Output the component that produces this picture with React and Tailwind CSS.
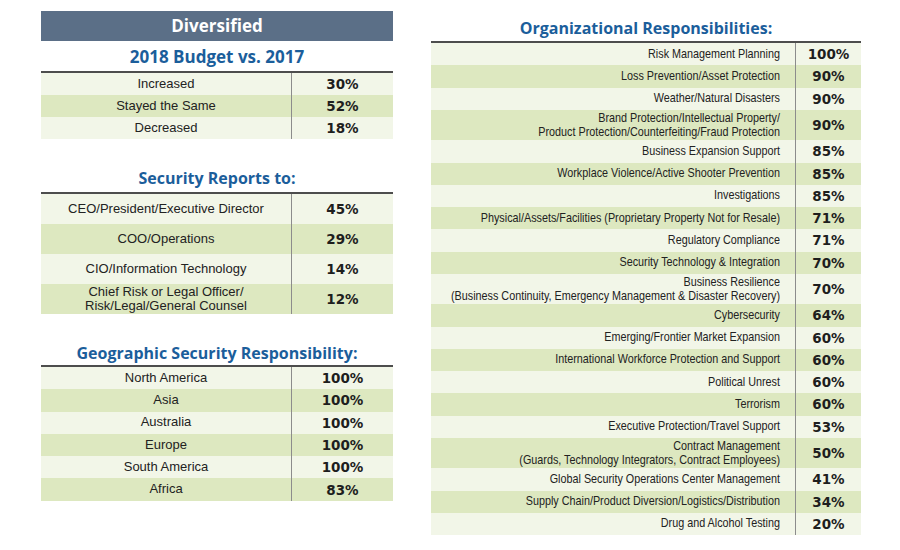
import React from 'react';

const budget = [
  ['Increased', '30%'],
  ['Stayed the Same', '52%'],
  ['Decreased', '18%'],
];

const reports = [
  ['CEO/President/Executive Director', '45%'],
  ['COO/Operations', '29%'],
  ['CIO/Information Technology', '14%'],
  [['Chief Risk or Legal Officer/', 'Risk/Legal/General Counsel'], '12%'],
];

const geo = [
  ['North America', '100%'],
  ['Asia', '100%'],
  ['Australia', '100%'],
  ['Europe', '100%'],
  ['South America', '100%'],
  ['Africa', '83%'],
];

const org = [
  ['Risk Management Planning', '100%'],
  ['Loss Prevention/Asset Protection', '90%'],
  ['Weather/Natural Disasters', '90%'],
  [['Brand Protection/Intellectual Property/', 'Product Protection/Counterfeiting/Fraud Protection'], '90%'],
  ['Business Expansion Support', '85%'],
  ['Workplace Violence/Active Shooter Prevention', '85%'],
  ['Investigations', '85%'],
  ['Physical/Assets/Facilities (Proprietary Property Not for Resale)', '71%'],
  ['Regulatory Compliance', '71%'],
  ['Security Technology & Integration', '70%'],
  [['Business Resilience', '(Business Continuity, Emergency Management & Disaster Recovery)'], '70%'],
  ['Cybersecurity', '64%'],
  ['Emerging/Frontier Market Expansion', '60%'],
  ['International Workforce Protection and Support', '60%'],
  ['Political Unrest', '60%'],
  ['Terrorism', '60%'],
  ['Executive Protection/Travel Support', '53%'],
  [['Contract Management', '(Guards, Technology Integrators, Contract Employees)'], '50%'],
  ['Global Security Operations Center Management', '41%'],
  ['Supply Chain/Product Diversion/Logistics/Distribution', '34%'],
  ['Drug and Alcohol Testing', '20%'],
];

const Title = ({ children, className }) => (
  <div className={`flex items-end justify-center leading-[20px] font-bold text-[#1b5e9b] font-['Open_Sans',sans-serif] ${className}`}>
    {children}
  </div>
);

const Label = ({ text }) =>
  Array.isArray(text) ? (
    <>
      {text.map((t) => (
        <div key={t}>{t}</div>
      ))}
    </>
  ) : (
    <div>{text}</div>
  );

const LeftTable = ({ rows, rowH }) => (
  <div className="border-t-2 border-[#4d4d4d]">
    {rows.map(([label, value], i) => (
      <div
        key={value + i}
        className={`flex ${rowH} ${i % 2 ? 'bg-[#dde8c0]' : 'bg-[#f2f6e8]'}`}
      >
        <div className="w-[250px] pb-[1px] flex flex-col items-center justify-center text-center text-[13px] leading-[14px] text-[#222] font-['Liberation_Sans',sans-serif]">
          <Label text={label} />
        </div>
        <div className="flex-1 flex items-center justify-center border-l border-[#8c8c8c] text-[13.5px] font-bold text-[#1e1e1e] font-['DejaVu_Sans',sans-serif]">
          {value}
        </div>
      </div>
    ))}
  </div>
);

export default function App() {
  return (
    <div className="w-[900px] h-[550px] bg-white flex">
      <div className="ml-[41px] mt-[11px] w-[352px] flex flex-col">
        <div className="h-[30px] bg-[#5b6f87] flex items-center justify-center text-white text-[17px] font-bold font-['Open_Sans',sans-serif]">
          Diversified
        </div>
        <Title className="h-[30px] pb-[4px] text-[17px]">2018 Budget vs. 2017</Title>
        <LeftTable rows={budget} rowH="h-[22px]" />
        <Title className="h-[53px] pb-[4px] text-[16px]">Security Reports to:</Title>
        <LeftTable rows={reports} rowH="h-[30px]" />
        <Title className="h-[51px] pb-[2px] text-[16px]">Geographic Security Responsibility:</Title>
        <LeftTable rows={geo} rowH="h-[22.3px]" />
      </div>
      <div className="ml-[38px] w-[430px] flex flex-col">
        <Title className="h-[41px] pb-[3px] text-[16px]">Organizational Responsibilities:</Title>
        <div className="border-t-2 border-[#4d4d4d]">
          {org.map(([label, value], i) => (
            <div
              key={value + i}
              className={`flex ${Array.isArray(label) ? 'h-[30.5px]' : 'h-[22.25px]'} ${i % 2 ? 'bg-[#dde8c0]' : 'bg-[#f2f6e8]'}`}
            >
              <div className="w-[364px] pr-[15px] flex">
                <div className="flex-1 min-w-0 origin-right scale-x-[0.83] pb-[1px] flex flex-col items-end justify-center text-right whitespace-nowrap text-[13px] leading-[14px] text-[#222] font-['Liberation_Sans',sans-serif]">
                  <Label text={label} />
                </div>
              </div>
              <div className="flex-1 flex items-center justify-center border-l border-[#8c8c8c] text-[13.5px] font-bold text-[#1e1e1e] font-['DejaVu_Sans',sans-serif]">
                {value}
              </div>
            </div>
          ))}
        </div>
      </div>
    </div>
  );
}
